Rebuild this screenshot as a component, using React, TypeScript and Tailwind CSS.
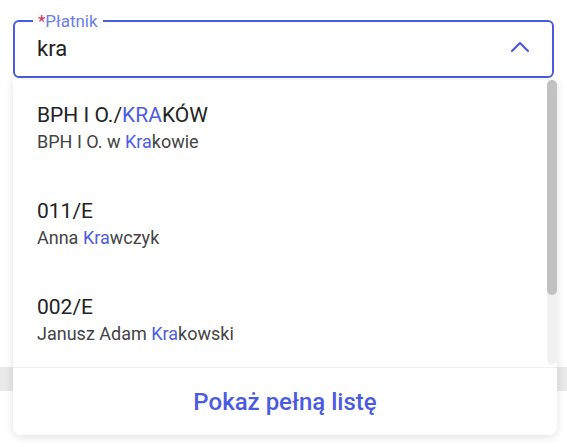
import React from "react";

const BLUE = "text-[#4c5ee0]";

function Hl({ pre, hit, post }: { pre: string; hit: string; post: string }) {
  return (
    <>
      {pre}
      <span className={BLUE}>{hit}</span>
      {post}
    </>
  );
}

const items = [
  { t: ["BPH I O./", "KRA", "KÓW"], s: ["BPH I O. w ", "Kra", "kowie"] },
  { t: ["011/E", "", ""], s: ["Anna ", "Kra", "wczyk"] },
  { t: ["002/E", "", ""], s: ["Janusz Adam ", "Kra", "kowski"] },
];

export default function App() {
  return (
    <div className="relative w-[567px] h-[447px] bg-white overflow-hidden" style={{ fontFamily: "Roboto, 'Liberation Sans', sans-serif" }}>
      <div className="pt-[20px] px-[13px]">
        <div className="relative h-[58px] rounded-[6px] border-2 border-[#4a5be0] flex items-center pl-[22px] pr-[22px]">
          <div className="absolute left-[18px] top-[-12px] bg-white px-[5px] text-[17px] leading-[22px] text-[#6d7ee9]">
            <span className="text-[#e0245e]">*</span>Płatnik
          </div>
          <div className="flex-1 text-[22px] leading-[26px] text-[#222]">kra</div>
          <svg width="20" height="12" viewBox="0 0 20 12" className="mt-[-4px]">
            <path d="M2 10 L10 2 L18 10" fill="none" stroke="#4a5be0" strokeWidth="2.2" strokeLinecap="round" strokeLinejoin="round" />
          </svg>
        </div>
      </div>
      <div className="mt-[289px] h-[24px] bg-[#e9e9e9]" />

      <div className="absolute left-[13px] top-[80px] w-[544px] h-[355px] bg-white rounded-b-[8px] shadow-[0_2px_10px_rgba(0,0,0,0.12)] flex flex-col">
        <div className="relative flex-1 overflow-hidden">
          <div className="pl-[24px]">
            {items.map((it, i) => (
              <div key={i} className="h-[96px] pt-[22px]">
                <div className="text-[21px] leading-[26px] text-[#222]">
                  <Hl pre={it.t[0]} hit={it.t[1]} post={it.t[2]} />
                </div>
                <div className="mt-[1px] text-[18px] leading-[26px] text-[#444]">
                  <Hl pre={it.s[0]} hit={it.s[1]} post={it.s[2]} />
                </div>
              </div>
            ))}
          </div>
          <div className="absolute right-0 top-0 bottom-[2px] w-[10px] rounded-full bg-[#f1f1f1]">
            <div className="h-[215px] rounded-full bg-[#c1c1c1]" />
          </div>
        </div>
        <div className="h-[68px] border-t border-[#eeeeee] flex items-center justify-center">
          <span className="text-[24px] font-medium text-[#4a5be0]">Pokaż pełną listę</span>
        </div>
      </div>
    </div>
  );
}
